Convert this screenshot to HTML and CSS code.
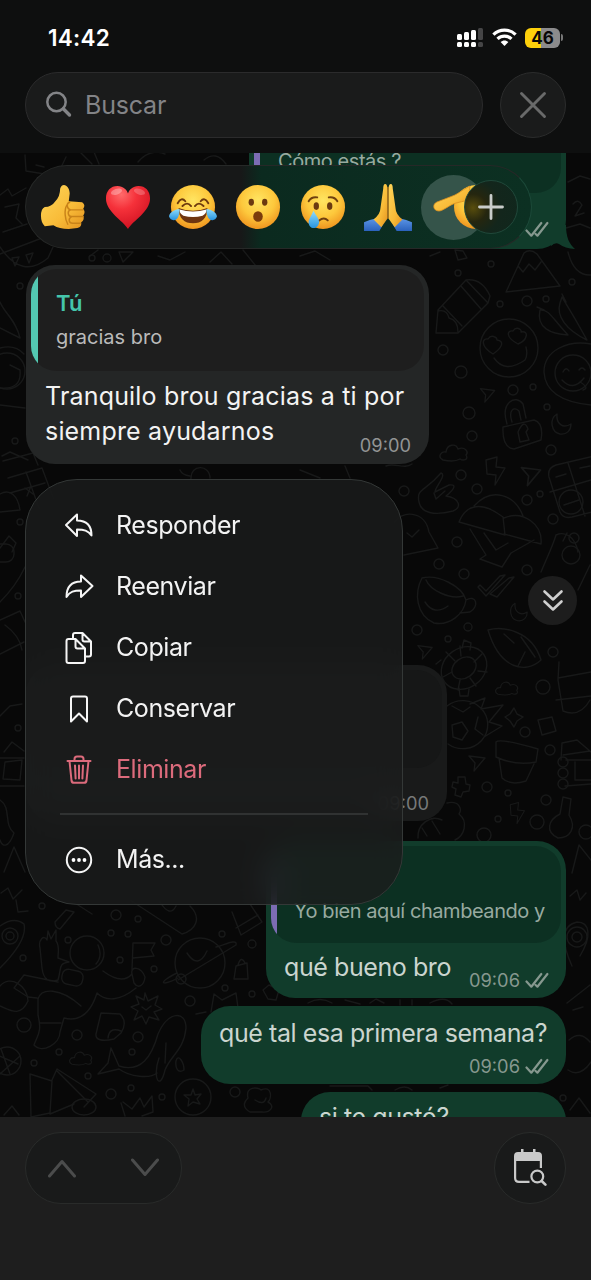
FILE: index.html
```html
<!DOCTYPE html>
<html lang="es">
<head>
<meta charset="utf-8">
<title>Chat</title>
<link rel="stylesheet" href="styles.css">
</head>
<body>
<svg class="defs" width="0" height="0" aria-hidden="true">
  <defs>
    <radialGradient id="face" cx=".5" cy=".35" r=".68">
      <stop offset="0" stop-color="#ffe562"/><stop offset=".55" stop-color="#fdc83c"/><stop offset="1" stop-color="#ee8f1c"/>
    </radialGradient>
    <linearGradient id="skin" x1="0" y1="0" x2="1" y2="1">
      <stop offset="0" stop-color="#ffd65a"/><stop offset=".6" stop-color="#f8bb38"/><stop offset="1" stop-color="#e3921f"/>
    </linearGradient>
    <radialGradient id="heart" cx=".35" cy=".2" r=".85">
      <stop offset="0" stop-color="#ff6a6a"/><stop offset=".4" stop-color="#f5313a"/><stop offset="1" stop-color="#cf1020"/>
    </radialGradient>
    <linearGradient id="tear" x1="0" y1="0" x2="0" y2="1">
      <stop offset="0" stop-color="#8fdcfb"/><stop offset="1" stop-color="#2794e0"/>
    </linearGradient>
    <linearGradient id="sleeve" x1="0" y1="0" x2="0" y2="1">
      <stop offset="0" stop-color="#5b95e6"/><stop offset="1" stop-color="#2b62bd"/>
    </linearGradient>
    <symbol id="ticks" viewBox="0 0 24 17">
      <path d="M1.5 9.5 6.3 14.7 16.3 2M10.6 13 12.4 14.7 22.4 2" fill="none" stroke="currentColor" stroke-width="2.2" stroke-linecap="round" stroke-linejoin="round"/>
    </symbol>
    <symbol id="cursor" viewBox="0 0 20 20"><path d="M2 3 18 5 7 18 8 10Z"/></symbol>
    <symbol id="bolt" viewBox="0 0 24 30"><path d="M3 4 14 1 13 11 22 12 12 29 13 19 4 18Z"/></symbol>
    <symbol id="cloud" viewBox="0 0 32 20"><path d="M5 17C-1 14 3 8 8 9 9 1 18 0 20 6 27 3 31 9 28 12 31 17 25 18 22 16 17 19 10 18 5 17Z"/></symbol>
    <symbol id="moon" viewBox="0 0 24 24"><path d="M8 2C0 7 2 20 11 22 18 23 22 18 22 12 14 17 7 12 8 2Z"/></symbol>
  </defs>
</svg>

<div class="screen">
  <header class="top">
    <div class="status">
      <span class="clock">14:42</span>
      <div class="indicators">
        <svg width="27" height="19" viewBox="0 0 27 19">
          <g fill="#fff"><rect x="0" y="6" width="5" height="6" rx="1.500"/><rect x="7" y="4" width="5" height="8" rx="1.500"/><rect x="14" y="2" width="5" height="10" rx="1.500"/><rect x="0" y="14" width="5" height="5" rx="1.500"/><rect x="7" y="14" width="5" height="5" rx="1.500"/><rect x="14" y="14" width="5" height="5" rx="1.500"/></g>
          <g fill="#454546"><rect x="21" y="0" width="5" height="12" rx="1.500"/><rect x="21" y="14" width="5" height="5" rx="1.500"/></g>
        </svg>
        <svg class="wifi" width="25" height="19" viewBox="0 0 25 19" fill="none" stroke="#fff" stroke-width="3.200">
          <path d="M1.400 6.600C7.600.5 17.400.5 23.600 6.600"/><path d="M5.500 10.900C9.400 7.200 15.600 7.200 19.500 10.900"/><path d="M12.500 18 8.600 14.100C10.800 12 14.200 12 16.400 14.100Z" fill="#fff" stroke="none"/>
        </svg>
        <div class="battery"><span>46</span></div><i class="battery-cap"></i>
      </div>
    </div>
    <div class="search-row">
      <div class="search">
        <svg width="28" height="28" viewBox="0 0 28 28" fill="none" stroke="#838487" stroke-linecap="round"><circle cx="11.500" cy="11" r="9.200" stroke-width="2.500"/><path d="M18.300 17.800 24.500 24" stroke-width="3.400"/></svg>
        <span>Buscar</span>
      </div>
      <button class="round close" aria-label="Cerrar"><svg width="28" height="28" viewBox="0 0 28 28"><path d="M2.500 2.500 25.500 25.500M25.500 2.500 2.500 25.500" stroke="#696a6a" stroke-width="2.900" stroke-linecap="round"/></svg></button>
    </div>
  </header>

  <main class="chat">
    <svg class="wallpaper" viewBox="0 153 591 964" fill="none" stroke="#181919" stroke-width="1.400" stroke-linejoin="round" stroke-linecap="round">
      <!-- right column -->
      <path d="M506 292 524 253Q530 248 537 254L560 286ZM518 266 523 272 529 264 535 270 541 262"/>
      <path d="M436 333 438 310 466 280Q482 278 490 296L488 303 458 333ZM438 311Q447 309 449 318 458 320 458 332M443 306 462 326M461 286 481 309M466 280 488 303"/>
      <circle cx="509" cy="348" r="29"/><path d="M494 358Q505 374 525 360 528 355 526 347M493 354C480 346 482 338 488 339 491 334 497 337 497 340 505 341 502 348 493 354ZM518 344C505 337 507 330 513 331 516 326 522 329 521 332 529 330 528 340 518 344Z"/>
      <path d="M540 310C549 309 552 318 568 335 551 334 536 328 540 310ZM562 297C570 310 575 318 587 340 566 330 556 316 560 303ZM544 310 537 307M566 302 562 294"/>
      <circle cx="573" cy="373" r="18"/><path d="M591 344C568 340 544 350 544 372 545 390 560 402 591 405M563 372Q566 366 569 371M579 370Q582 366 585 370M562 380Q573 392 584 378M580 382Q590 388 583 390"/>
      <path d="M503 427 534 420Q544 423 541 440L514 449Q502 448 503 427ZM507 424C500 402 516 394 523 404L526 418M512 422C508 410 514 406 519 411L521 420M518 432Q524 418 528 429L526 432 529 440 520 442Z"/>
      <use href="#moon" x="549" y="412" width="24" height="24"/>
      <use href="#cloud" x="438" y="442" width="32" height="22"/>
      <use href="#bolt" x="483" y="454" width="24" height="34"/>
      <use href="#cursor" x="478" y="386" width="19" height="18"/><use href="#cursor" x="519" y="464" width="24" height="24"/>
      <path d="M419 502C416 488 425 492 441 473 447 475 435 487 435 492L449 485C456 484 456 488 446 496 460 498 462 508 453 511 434 516 421 513 419 502ZM434 493 436 499 445 491"/>
      <path d="M459 522C466 504 482 501 503 517L505 535ZM474 506C492 486 515 495 523 516M504 518C523 510 543 524 541 544L504 534M470 529 486 555 480 559 502 567 511 553 534 540M484 533 496 550 508 543"/>
      <path d="M594 456 556 465Q547 468 549 477L560 512Q563 519 572 517L592 512M550 492 591 480M568 463 585 516M556 477 566 474M580 468 590 466"/><circle cx="571" cy="502" r="12"/><path d="M564 505 579 500"/>
      <path d="M422 578C438 574 462 586 466 600 464 614 450 626 434 623 416 615 414 593 422 578ZM426 580C430 590 450 600 463 596M425 602Q434 616 448 606M466 600C476 594 480 606 470 612L460 613"/>
      <path d="M478 587 486 596 505 575 500 576 486 591 480 585ZM490 594 509 578 514 577 497 597Z"/>
      <path d="M541 572C548 555 552 548 556 535 565 531 575 536 578 552M563 541 567 533M578 590 590 565"/><circle cx="571" cy="555" r="9"/><circle cx="574" cy="538" r="5"/>
      <use href="#moon" x="508" y="600" width="21" height="24"/>
      <path d="M488 630C502 626 532 630 541 660 526 674 500 670 488 630ZM504 634 514 643M521 637 535 657M525 652 518 666"/>
      <ellipse cx="464" cy="668" rx="24" ry="20" transform="rotate(-35 464 668)"/><ellipse cx="464" cy="668" rx="13" ry="10" transform="rotate(-35 464 668)"/><path d="M446 652 455 661M460 646 461 656M482 654 474 662M487 672 478 671M476 686 470 678M458 690 460 680M443 677 452 672M441 660 436 664M459 688 460 696 468 696 469 689M462 648 464 640 471 643 470 650"/>
      <path d="M447 706A25 24 0 1 1 448 744M452 725 462 722 468 731 462 740 453 737ZM452 706 463 712 470 707M478 717 475 729 483 735M470 704 485 698 481 709 503 705 489 722 502 726 484 737"/>
      <use href="#cloud" x="494" y="680" width="26" height="17"/><path d="M514 708 517 714 523 717 517 721 514 727 510 721 505 717 510 714ZM538 720 552 717 556 731 542 735ZM556 700 591 696M558 678 591 672M559 662 558 680 563 711Q580 718 590 700"/>
      <path d="M496 742Q500 738 538 749L536 762Q515 766 496 757ZM499 758 502 778Q510 786 526 781L534 764"/>
      <path d="M458 777 465 777 466 784 470 785 469 791 463 792 461 797 455 795 456 789 452 787 453 782 458 783Z"/><use href="#cursor" x="466" y="753" width="22" height="20"/><use href="#cursor" x="416" y="643" width="18" height="18"/>
      <path d="M561 760 562 743 577 740 591 752M563 755 590 751M566 760H591M565 786 591 784M575 762V780H591"/><circle cx="563" cy="762" r="5"/><circle cx="563" cy="773" r="5"/><circle cx="563" cy="784" r="5"/>
      <path d="M563 797 571 799 569 815C577 828 570 838 558 838 545 832 548 820 560 814Z"/><use href="#bolt" x="508" y="801" width="18" height="24"/>
      <path d="M447 803C460 800 462 810 459 814 469 822 464 836 455 840M418 838C417 825 430 814 442 820M422 828 427 836M432 821 440 834"/><path d="M572 873 579 845 591 860M570 896 577 890 580 900 586 893"/>
      <circle cx="577" cy="937" r="5"/><circle cx="577" cy="937" r="10"/><path d="M572 966C562 944 560 926 577 922 590 922 592 936 580 956"/>
      <path d="M567 1003 590 985M573 1010 583 1007M569 1040Q580 1030 590 1042M568 1070Q580 1078 591 1062M570 1110 579 1098 590 1113"/>
      <path d="M568 182 580 176 590 179M573 204Q578 198 582 205L575 216 584 213M566 228 580 224 590 228M568 252Q574 276 591 275"/>
      <!-- left column -->
      <path d="M25 155 26 171 57 176 66 157M36 165 44 167M80 152 92 164M94 152 99 164M138 162Q150 148 165 154M204 160Q216 150 226 164"/>
      <path d="M0 195 8 189 12 196 26 188M5 207 19 204 16 218 22 224M3 232 27 224M0 254 42 238"/><path d="M0 247Q22 280 48 258L53 247M12 258 15 266 19 257ZM26 255 29 263 33 253Z"/>
      <path d="M90 256 98 250M119 252 123 262 133 252ZM158 256 170 260 185 252M210 262 221 252 232 264M243 250 256 266M300 256 315 251 330 260M430 256 440 252M455 250 463 251 467 258 458 260Z"/>
      <path d="M0 302C5 314 16 320 20 338L0 328M0 348Q15 344 24 354M0 388Q22 390 20 370L10 365M0 405 25 408M2 456 10 452 28 460M3 461 33 453 38 465"/>
      <circle cx="7" cy="371" r="18"/><circle cx="20" cy="286" r="3"/><circle cx="15" cy="441" r="3"/>
      <path d="M8 478 42 468 54 500M10 493 45 483M26 472 39 508M0 494C10 488 18 496 20 510L0 512M25 488 33 494M31 486 27 496"/><rect x="-12" y="544" width="26" height="18" rx="8"/><path d="M0 602Q16 586 25 567M0 620 20 611 25 622M0 654 24 642M5 625Q20 636 22 650M0 548 9 536 16 543 12 552"/>
      <path d="M0 716 10 706 22 704M4 752 12 742 24 751M0 758H24M5 762 22 760 20 780 3 779ZM0 786H24M0 800C12 808 3 824 14 833 8 850 2 846 0 840"/><path d="M4 872 14 847 25 872M1 893 8 888 13 899 22 890M16 900 18 912 28 911"/>
      <path d="M180 470Q182 475 190 476M191 479C190 464 210 464 210 478M300 470 320 478M345 466 350 478M386 466C395 462 404 470 412 464M394 523C401 510 425 510 429 532L438 548 404 555M407 533 412 537 419 530"/>
      <!-- lower left -->
      <circle cx="87" cy="953" r="17"/><path d="M98 945Q103 956 96 964M69 962C58 964 62 966 58 980Q44 985 42 968L40 948C38 940 44 934 47 940L48 931 51 939 56 930 56 941C60 946 58 951 58 958ZM103 971C115 980 125 982 132 974M132 974C130 966 141 966 145 977 144 986 138 989 134 983ZM136 988C120 1001 106 1002 97 993M97 993C91 1012 80 1022 64 1018L60 1032C60 1044 42 1054 34 1045 38 1034 42 1032 38 1015L38 999C41 988 60 987 81 1006M58 982 24 975 14 988 28 997 37 998M40 1023 61 1023M132 970 133 943 155 943 151 950 154 956 133 958"/><rect x="62" y="970" width="21" height="15" rx="6" transform="rotate(12 72 977)"/>
      <circle cx="10" cy="936" r="8"/><circle cx="10" cy="936" r="4"/><path d="M0 968Q28 940 24 924 14 916 0 926M0 986C10 974 28 986 28 1001 20 1018 10 1010 0 1006"/>
      <circle cx="200" cy="963" r="25"/><path d="M187 953Q198 970 207 951M177 973C155 984 163 986 178 978M178 980 236 945C238 938 224 945 216 947"/><circle cx="181" cy="979" r="5"/>
      <path d="M130 900 182 934C196 930 202 918 190 906M160 902Q170 918 176 906M55 922 66 910 74 912 60 929Q55 928 55 922ZM78 905 92 914M232 912 241 935 262 922 250 904M236 928 258 915"/>
      <path d="M145 993 148 1001 158 996 155 1005 162 1009 154 1012 159 1020 149 1017 146 1024 142 1016 134 1020 138 1011 131 1007 139 1004 136 996 144 1000ZM142 1007 146 1010 151 1006"/>
      <path d="M101 1013 120 1014Q128 1022 121 1033L114 1039Q95 1043 96 1034ZM108 1038C109 1028 116 1029 121 1031"/>
      <path d="M119 1066C141 1073 152 1056 158 1034 168 1011 186 1010 186 1028 184 1050 171 1055 165 1070 160 1092 152 1078 159 1058M119 1066 111 1048 108 1063 98 1074 119 1069C130 1077 150 1079 157 1073M166 1043 165 1063M176 1061C178 1053 184 1062 184 1070 178 1074 175 1068 176 1061Z"/>
      <use href="#cloud" x="68" y="1049" width="26" height="19"/><circle cx="7" cy="1061" r="14"/><path d="M-3 1055 18 1064M1 1049 10 1074M0 1074 20 1056"/>
      <path d="M30 1074 52 1081 50 1113 31 1117ZM52 1080 57 1069 96 1094 84 1107M57 1071 88 1102M50 1114 74 1104"/><ellipse cx="84" cy="1107" rx="12" ry="8"/><path d="M4 1115 12 1106 19 1115M123 1102 132 1109 140 1098 144 1107 152 1096 153 1112 142 1116M125 1116 121 1103"/>
      <circle cx="193" cy="1097" r="18"/><path d="M193 1089 195 1095 201 1094 197 1099 200 1104 193 1102 188 1106 189 1099 184 1095 191 1095ZM250 1112C240 1106 246 1100 248 1098 245 1086 258 1087 261 1090 272 1085 272 1098 268 1102 276 1106 270 1113 262 1112ZM255 1100Q264 1106 266 1098"/>
      <path d="M236 966 247 963 248 979 234 979ZM238 965Q241 955 245 963M211 1012 214 994 222 1000 236 993 238 1008M196 1014 206 1012M263 990 269 985 279 990 276 1000 268 999ZM308 1003Q320 996 332 1003M345 1000 360 1004M370 1003 376 999 384 1003M400 1000V1005M412 1000V1005M430 1003Q445 995 452 1004M330 1086H368L372 1090M395 1090Q405 1084 412 1090M440 1088 448 1085"/>
      <g><circle cx="443" cy="350" r="5"/><circle cx="461" cy="372" r="6"/><circle cx="469" cy="413" r="6"/><circle cx="500" cy="304" r="3"/><circle cx="527" cy="301" r="5"/><circle cx="546" cy="299" r="3"/><circle cx="513" cy="390" r="5"/><circle cx="533" cy="387" r="3"/><circle cx="547" cy="407" r="3"/><circle cx="472" cy="436" r="5"/><circle cx="551" cy="450" r="5"/><circle cx="461" cy="475" r="5"/><circle cx="477" cy="489" r="5"/><circle cx="527" cy="500" r="5"/><circle cx="540" cy="494" r="3"/><circle cx="553" cy="519" r="5"/><circle cx="457" cy="542" r="5"/><circle cx="439" cy="564" r="5"/><circle cx="464" cy="574" r="5"/><circle cx="404" cy="491" r="5"/><circle cx="527" cy="570" r="5"/><circle cx="468" cy="627" r="4"/><circle cx="417" cy="630" r="5"/><circle cx="448" cy="639" r="3"/><circle cx="553" cy="652" r="5"/><circle cx="543" cy="687" r="7"/><circle cx="525" cy="732" r="5"/><circle cx="550" cy="750" r="5"/><circle cx="487" cy="787" r="5"/><circle cx="508" cy="793" r="3"/><circle cx="546" cy="800" r="5"/><circle cx="537" cy="822" r="7"/><circle cx="498" cy="819" r="3"/><circle cx="484" cy="835" r="7"/><circle cx="586" cy="832" r="7"/><circle cx="491" cy="264" r="3"/><circle cx="572" cy="282" r="3"/><circle cx="458" cy="273" r="3"/><circle cx="92" cy="258" r="3"/><circle cx="107" cy="258" r="4"/><circle cx="116" cy="915" r="5"/><circle cx="42" cy="906" r="3"/><circle cx="111" cy="933" r="3"/><circle cx="128" cy="934" r="3"/><circle cx="166" cy="940" r="5"/><circle cx="138" cy="919" r="3"/><circle cx="68" cy="940" r="3"/><circle cx="23" cy="958" r="3"/><circle cx="120" cy="960" r="3"/><circle cx="154" cy="969" r="3"/><circle cx="190" cy="1001" r="5"/><circle cx="24" cy="1025" r="7"/><circle cx="77" cy="1035" r="5"/><circle cx="138" cy="1037" r="5"/><circle cx="34" cy="1063" r="3"/><circle cx="132" cy="1052" r="3"/><circle cx="59" cy="1052" r="3"/><circle cx="88" cy="1076" r="3"/><circle cx="111" cy="1094" r="5"/><circle cx="131" cy="1088" r="3"/><circle cx="162" cy="1097" r="3"/><circle cx="235" cy="1092" r="5"/><circle cx="225" cy="988" r="3"/><circle cx="252" cy="944" r="4"/><circle cx="252" cy="994" r="3"/><circle cx="222" cy="934" r="3"/><circle cx="563" cy="1098" r="3"/><circle cx="20" cy="522" r="3"/><circle cx="18" cy="596" r="3"/><circle cx="18" cy="728" r="3"/></g>
    </svg>

    <div class="thread">
      <div class="bubble out first">
        <div class="quote"><p class="quote-text">Cómo estás ?</p></div>
        <div class="meta corner"><svg class="ticks" width="24" height="17"><use href="#ticks"/></svg></div>
        <svg class="tail" width="24" height="24" viewBox="0 0 24 24"><path d="M15 0C15 12 18 19 24 24Q14 23.500 8 19 4 17 0 21V0Z" fill="#113c2b"/></svg>
      </div>
      <div class="bubble in focus">
        <div class="quote"><p class="quote-name">Tú</p><p class="quote-text">gracias bro</p></div>
        <p class="text">Tranquilo brou gracias a ti por</p>
        <div class="line"><p class="text">siempre ayudarnos</p><div class="meta">09:00</div></div>
      </div>
      <div class="bubble in dim">
        <div class="quote"></div>
        <div class="meta">09:00</div>
      </div>
      <div class="bubble out reply">
        <div class="quote"><p class="quote-text">Yo bien aquí chambeando y</p></div>
        <div class="line"><p class="text">qué bueno bro</p><div class="meta">09:06<svg class="ticks" width="24" height="17"><use href="#ticks"/></svg></div></div>
      </div>
      <div class="bubble out week">
        <p class="text">qué tal esa primera semana?</p>
        <div class="meta">09:06<svg class="ticks" width="24" height="17"><use href="#ticks"/></svg></div>
      </div>
      <div class="bubble out last"><p class="text">si te gustó?</p></div>
    </div>

    <div class="reactions">
      <svg class="emoji" viewBox="0 0 48 48"><path d="M25 1C28 1 31 5 31 10L30 18 44 19Q48 22 45 26 48 29 45 33 47 37 43 40 44 45 39 46L30 47Q20 47 14 43L5 44Q1 40 1 33 1 26 5 24 12 24 16 18 21 13 21 5 22 1 25 1Z" fill="url(#skin)"/><path d="M31 19C27 20 28 26 32 27H45M32 27C28 28 29 34 33 34H45M33 34C29 36 30 41 34 41H42M28 22C25 27 26 37 29 42" fill="none" stroke="#c98319" stroke-width="1.500" stroke-linecap="round"/></svg>
      <svg class="emoji" viewBox="0 0 48 48"><path d="M24 47C19 38 1 29 1 15 1 7 6 2 13 2 19 2 23 6 24 10 25 6 29 2 35 2 42 2 47 7 47 15 47 29 29 38 24 47Z" fill="url(#heart)"/><ellipse cx="12" cy="8" rx="6" ry="3" fill="#fff" opacity=".3" transform="rotate(-18 12 8)"/><ellipse cx="36" cy="8" rx="6" ry="3" fill="#fff" opacity=".22" transform="rotate(18 36 8)"/></svg>
      <svg class="emoji" viewBox="0 0 48 48"><circle cx="24" cy="24" r="23" fill="url(#face)"/><path d="M9 25Q24 31 39 25C39 36 33 41 24 41S9 36 9 25Z" fill="#6e3510"/><path d="M10 26.500Q24 31 38 26.500 38 31 34 33 24 36 14 33 10 31 10 26.500Z" fill="#fff"/><path d="M13 23Q18 18 22 23M26 23Q30 18 35 23M8 20Q12 13 16 18M32 18Q36 13 40 20" fill="none" stroke="#6e3b0e" stroke-width="2" stroke-linecap="round"/><path d="M10 26C5 26-1 30-1 34 1 40 8 38 9 33 10 31 10 28 10 26ZM38 26C43 26 49 30 49 34 47 40 40 38 39 33 38 31 38 28 38 26Z" fill="url(#tear)"/></svg>
      <svg class="emoji" viewBox="0 0 48 48"><circle cx="24" cy="24" r="23" fill="url(#face)"/><ellipse cx="17" cy="19" rx="2.800" ry="3.600" fill="#6b3a10"/><ellipse cx="31" cy="19" rx="2.800" ry="3.600" fill="#6b3a10"/><ellipse cx="24" cy="34" rx="5" ry="5.500" fill="#7a3c0c"/></svg>
      <svg class="emoji" viewBox="0 0 48 48"><circle cx="24" cy="24" r="23" fill="url(#face)"/><ellipse cx="17" cy="23" rx="2.800" ry="4" fill="#6b3a10"/><ellipse cx="31" cy="23" rx="2.800" ry="4" fill="#6b3a10"/><path d="M9 18Q12 13 18 14M30 14Q36 13 39 18M20 38Q25 34 29 38" fill="none" stroke="#70400f" stroke-width="2" stroke-linecap="round"/><path d="M14 28C17 33 20 37 20 40 19 48 9 48 9 40 9 37 12 33 14 28Z" fill="url(#tear)"/></svg>
      <svg class="emoji" viewBox="0 0 48 48"><path d="M-1 40Q5 37 11 36L19 42 15 49H-1ZM49 40Q43 37 37 36L29 42 33 49H49Z" fill="url(#sleeve)"/><path d="M23.500 6 23.500 36 17 45 9 37Q16 31 16 26L19 5Q19 0 21 0 23.500 0 23.500 6Z" fill="url(#skin)"/><path d="M24.500 6 24.500 36 31 45 39 37Q32 31 32 26L29 5Q29 0 27 0 24.500 0 24.500 6Z" fill="url(#skin)"/><path d="M24 3V36" stroke="#b97518" stroke-width="1.200"/></svg>
      <div class="picked"><svg class="salute" width="48" height="48" viewBox="0 0 48 48"><circle cx="46" cy="24" r="22" fill="url(#face)"/><path d="M40 3C32 7 27 12 20 14L7 19C2 21 3 28 9 28 13 28 21 21 26 20Q31 19 38 17Z" fill="url(#skin)" stroke="#dc9020" stroke-width=".8"/></svg></div>
      <button class="plus" aria-label="Más reacciones"><svg width="26" height="26" viewBox="0 0 26 26"><path d="M13 1.500V24.500M1.500 13H24.500" stroke="#c9ccca" stroke-width="2.800" stroke-linecap="round"/></svg></button>
    </div>

    <nav class="menu">
      <div class="item"><svg width="30" height="30" viewBox="0 0 30 30"><path d="M2 14 13 3.500V9.500C22 9.500 27.500 14.500 27.500 24.500 24 19.500 20 18.500 13 18.500V25Z"/></svg><span>Responder</span></div>
      <div class="item"><svg width="30" height="30" viewBox="0 0 30 30"><path d="M28.500 14 17 3.500V9.500C8 9.500 2.500 14.500 2.500 25 6 19.500 10 18.500 17 18.500V25Z"/></svg><span>Reenviar</span></div>
      <div class="item"><svg width="30" height="32" viewBox="0 0 30 32"><path d="M9 6V3Q9 1 11 1H18.500L27 9.500V22.500Q27 24.500 25 24.500H21M18.500 1V7.500Q18.500 9.500 20.500 9.500H27M4.500 7H11.500L21 16.500V29Q21 31 19 31H4.500Q2.500 31 2.500 29V9Q2.500 7 4.500 7ZM11.500 7V14.500Q11.500 16.500 13.500 16.500H21"/></svg><span>Copiar</span></div>
      <div class="item"><svg width="30" height="30" viewBox="0 0 30 30"><path d="M7 4.500Q7 2.500 9 2.500H21Q23 2.500 23 4.500V27.500L15 19.500 7 27.500Z"/></svg><span>Conservar</span></div>
      <div class="item danger"><svg width="30" height="30" viewBox="0 0 30 30"><path d="M3.500 6H26.500M10.500 6V4Q10.500 1.500 13 1.500H17Q19.500 1.500 19.500 4V6M5.500 6 7.500 25.500Q7.800 27.800 10 27.800H20Q22.200 27.800 22.500 25.500L24.500 6M11 10.500 11.600 23.500M15 10.500V23.500M19 10.500 18.400 23.500"/></svg><span>Eliminar</span></div>
      <hr>
      <div class="item"><svg width="30" height="30" viewBox="0 0 30 30"><circle cx="15" cy="15" r="12.200"/><g fill="#fff" stroke="none"><circle cx="9.500" cy="15" r="1.900"/><circle cx="15" cy="15" r="1.900"/><circle cx="20.500" cy="15" r="1.900"/></g></svg><span>Más...</span></div>
    </nav>

    <button class="jump" aria-label="Ir al final"><svg width="22" height="23" viewBox="0 0 22 23" fill="none" stroke="#cfcfcf" stroke-width="2.600" stroke-linecap="round" stroke-linejoin="round"><path d="M2.500 2.500 11 10.500 19.500 2.500M2.500 12.500 11 20.500 19.500 12.500"/></svg></button>
  </main>

  <footer class="bottom">
    <div class="arrows">
      <svg width="30" height="20" viewBox="0 0 30 20"><path d="M2.500 18 15 3.500 27.500 18"/></svg>
      <svg width="30" height="20" viewBox="0 0 30 20"><path d="M2.500 2 15 16.500 27.500 2"/></svg>
    </div>
    <button class="round calendar" aria-label="Buscar por fecha">
      <svg width="34" height="38" viewBox="0 0 34 38"><path d="M1 12V7Q1 3 5 3H8V0H10.500V3H20V0H22.500V3H25Q29 3 29 7V12Z" fill="#c9c9c9"/><path d="M2.100 10V29Q2.100 32.900 6 32.900H16.500M27.900 10V19" fill="none" stroke="#c9c9c9" stroke-width="2.200"/><circle cx="24.300" cy="27.500" r="5.900" fill="none" stroke="#c9c9c9" stroke-width="2.200"/><path d="M28.700 32 32.400 35.700" stroke="#c9c9c9" stroke-width="2.600" stroke-linecap="round"/></svg>
    </button>
  </footer>
</div>
</body>
</html>
```

FILE: styles.css
```css
* { box-sizing: border-box; }
body { margin: 0; background: #1e1e1e; font-family: Inter, "Liberation Sans", sans-serif; color: #f3f3f3; }
p { margin: 0; }
button { padding: 0; font: inherit; color: inherit; }
svg { display: block; flex: none; }
.defs { position: absolute; }
.screen { width: 591px; height: 1280px; display: flex; flex-direction: column; overflow: hidden; }

/* Header */
.top { height: 153px; flex: none; padding: 23px 25px 0; background: #0e0f0f; }
.status { height: 29px; margin-bottom: 20px; padding: 0 3px 0 23px; display: flex; align-items: center; justify-content: space-between; }
.clock { font-size: 22.5px; font-weight: 600; color: #fff; letter-spacing: .3px; }
.indicators { display: flex; align-items: center; }
.wifi { margin: 0 8px 0 8px; }
.battery { width: 35px; height: 20px; border-radius: 6px; background: linear-gradient(90deg, #fdd00b 46%, #8b8b8c 46%); display: flex; align-items: center; justify-content: center; color: #080808; font-size: 17px; font-weight: 700; line-height: 20px; }
.battery-cap { width: 2px; height: 7px; margin-left: 1px; border-radius: 0 3px 3px 0; background: #777; }
.search-row { display: flex; gap: 17px; }
.search { flex: 1; height: 66px; border: 1.5px solid #2b2b2c; border-radius: 33px; background: #1a1b1b; display: flex; align-items: center; gap: 12px; padding-left: 19px; font-size: 25px; letter-spacing: -.2px; color: #838487; }
.round { display: flex; align-items: center; justify-content: center; border: 1.5px solid #2b2c2c; border-radius: 50%; background: #1a1b1b; flex: none; }
.close { width: 66px; height: 66px; }

/* Conversation */
.chat { position: relative; height: 964px; flex: none; overflow: hidden; background: #080808; }
.wallpaper { position: absolute; inset: 0; width: 591px; height: 964px; }
.thread { position: relative; display: flex; flex-direction: column; padding: 0 25px 0 26px; }
.bubble { position: relative; flex: none; border-radius: 29px; padding: 5px; }
.out { align-self: flex-end; background: #113c2b; color: #cbd5cf; }
.in { align-self: flex-start; background: #242626; }
.quote { border-radius: 25px; overflow: hidden; background: linear-gradient(90deg, #53c8b2 7px, #1e1e1e 7px); padding: 0 0 0 25px; }
.out .quote { background: linear-gradient(90deg, #7c6cb4 6px, #0c3022 6px); }
.quote-name { color: #45c5ab; font-size: 22px; font-weight: 600; line-height: 30px; }
.quote-text { color: #bababa; font-size: 20px; line-height: 30px; white-space: nowrap; }
.out .quote-text { color: #98aaa0; letter-spacing: -.44px; }
.text { font-size: 25px; line-height: 35px; letter-spacing: -.42px; white-space: nowrap; }
.meta { display: flex; gap: 5px; align-items: center; justify-content: flex-end; font-size: 18.3px; line-height: 22px; color: #929494; }
.out .meta { color: #86988f; }
.line { display: flex; justify-content: space-between; }

.first { width: 317px; height: 149px; margin-top: -53px; }
.first .quote { height: 88px; padding: 41px 0 0 24px; }
.corner { padding: 28px 12px 0; }
.tail { position: absolute; right: -9px; bottom: 0; }
.focus { width: 403px; height: 199px; margin-top: 16px; padding-top: 4px; }
.focus .quote { height: 102px; padding-top: 19px; margin-bottom: 8px; }
.focus .quote-name { margin-bottom: 4px; }
.focus .text { padding-left: 14px; letter-spacing: .18px; }
.focus .meta { padding: 20px 13px 0 0; }
.dim { width: 421px; height: 156px; margin-top: 201px; background: #191a1a; }
.dim .quote { height: 98px; background: #161717; }
.dim .meta { padding: 24px 13px 0; color: #777979; }
.reply { width: 300px; height: 157px; margin-top: 20px; }
.reply .quote { height: 97px; padding: 50px 0 0 23px; }
.reply .line { padding: 7px 12px 0 13px; }
.reply .meta { padding-top: 19px; }
.week { width: 365px; height: 78px; margin-top: 8px; padding: 10px 17px 0 18px; }
.week .meta { margin-top: 4px; }
.last { width: 265px; height: 78px; margin-top: 8px; padding: 8px 18px; }

/* Reaction picker */
.reactions { position: absolute; left: 25px; top: 12px; width: 507px; height: 84px; border: 1.5px solid #262827; border-right-color: #1c4939; border-radius: 42px; display: flex; align-items: center; padding-left: 14px; gap: 19px; background: linear-gradient(90deg, #171818 0 215px, #0b2a1f 235px, #0c3022); }
.emoji { width: 46px; height: 46px; overflow: visible; }
.picked { width: 65px; height: 65px; margin-left: -9px; border-radius: 50%; background: #35544a; display: flex; align-items: center; justify-content: center; }
.salute { overflow: visible; }
.plus { position: absolute; right: 13px; top: 14px; width: 54px; height: 54px; border-radius: 50%; border: 1px solid #20483a; background: radial-gradient(circle at 8px 27px, #584d0c 0, #25260f 14px, #13261c 28px, #10271d); display: flex; align-items: center; justify-content: center; }

/* Context menu */
.menu { position: absolute; left: 25px; top: 326px; width: 378px; height: 426px; padding: 15px 34px; border: 1.5px solid #343837; border-radius: 52px; background: rgba(27, 29, 29, .8); backdrop-filter: blur(14px); }
.item { height: 61px; padding-left: 4px; display: flex; align-items: center; gap: 22px; font-size: 25px; letter-spacing: -.42px; }
.item span { margin-top: -2px; }
.item svg { width: 30px; fill: none; stroke: #f5f5f5; stroke-width: 2; stroke-linejoin: round; stroke-linecap: round; }
.danger { color: #dc6b7c; }
.item.danger svg { stroke: #dc6b7c; }
.menu hr { height: 2px; margin: 13px 0 14px; border: 0; background: #303232; }

.jump { position: absolute; left: 528px; top: 423px; width: 49px; height: 49px; border: 0; border-radius: 50%; background: #1d1d1d; display: flex; align-items: center; justify-content: center; }

/* Search navigation */
.bottom { flex: 1; display: flex; justify-content: space-between; align-items: flex-start; padding: 15px 25px 0; background: #1e1e1e; }
.arrows { width: 157px; height: 72px; border: 1.5px solid #292b2a; border-radius: 36px; background: #191a1a; display: flex; align-items: center; justify-content: space-between; padding: 0 21px; }
.arrows svg { fill: none; stroke: #4b4c4c; stroke-width: 3; stroke-linecap: round; stroke-linejoin: round; }
.calendar { width: 72px; height: 72px; background: #191a1a; border-color: #292b2a; }
```
